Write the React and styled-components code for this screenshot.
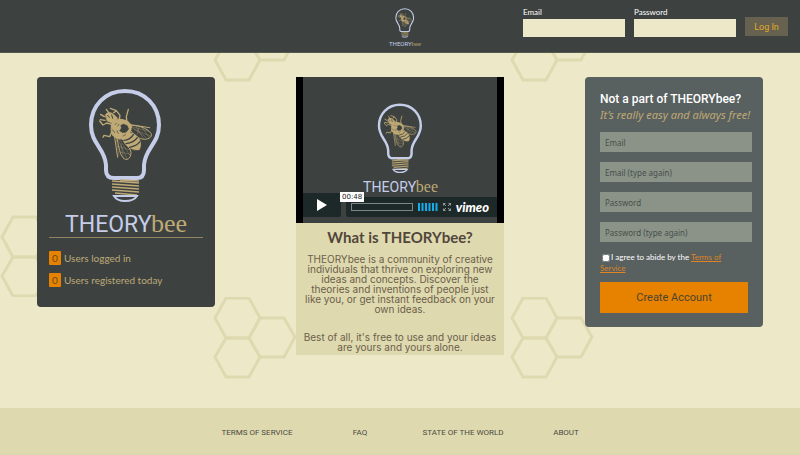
import React from "react";
import styled, { createGlobalStyle } from "styled-components";

const ink = "#3d4241";
const cream = "#ede9c8";
const sand = "#dfd9b0";
const tan = "#bfa975";
const orange = "#e68200";
const lavender = "#c5cde8";

const rounded = `Lato, "Open Sans", sans-serif`;
const technical = `Roboto, "Liberation Sans", sans-serif`;
const humanist = `"Noto Sans", "Open Sans", sans-serif`;

const honeycomb = encodeURIComponent(
  `<svg xmlns="http://www.w3.org/2000/svg" width="297" height="297"><defs><g id="c" fill="none" stroke="#dfd9b0" stroke-width="3"><path d="M215 21 226 1H249L260 21 249 41H226Z"/><path d="M215 60 226 41H249L260 60 249 80H226Z"/><path d="M249 41 260 21H284L295 40 284 60H260Z"/></g></defs><use href="#c"/><use href="#c" x="-213" y="216"/></svg>`
);

const GlobalStyle = createGlobalStyle`
  *, *::before, *::after { box-sizing: border-box; }
  body { margin: 0; background: ${cream}; font-family: ${rounded}; }
  h1, h2, p, ul { margin: 0; padding: 0; }
  input, button { font: inherit; border: 0; border-radius: 0; }
`;

const Page = styled.div`
  display: flex;
  flex-direction: column;
  min-height: 100vh;
  background: ${cream} url("data:image/svg+xml,${honeycomb}");
`;

const Header = styled.header`
  display: grid;
  grid-template-columns: minmax(0, 1fr) auto minmax(0, 1fr);
  align-items: start;
  height: 53px;
  padding: 8px 12px 0 22px;
  background: ${ink};
  border-bottom: 1px solid #55584f;
`;

const HomeLink = styled.a`
  grid-column: 2;
  display: block;
`;

const LoginForm = styled.form`
  display: flex;
  justify-content: flex-end;
  gap: 9px;
`;

const LoginField = styled.label`
  display: flex;
  flex-direction: column;
  gap: 2px;
  color: #fff;
  font-size: 8px;
  line-height: 9px;
`;

const LoginInput = styled.input`
  width: 102px;
  height: 18px;
  padding: 0 4px;
  background: ${cream};
  color: ${ink};
`;

const LoginButton = styled.button`
  width: 43px;
  height: 19px;
  margin-top: 9px;
  padding: 0;
  background: #67614f;
  color: #e2a92b;
  font-family: ${technical};
  font-size: 9px;
`;

const Main = styled.main`
  flex: 1;
  display: flex;
  justify-content: space-between;
  align-items: flex-start;
  padding: 24px 37px 48px;
`;

const StatsCard = styled.section`
  width: 178px;
  padding: 11px 12px 20px;
  border-radius: 4px;
  background: ${ink};
`;

const LogoHolder = styled.div`
  display: flex;
  justify-content: center;
  padding-bottom: 3px;
  border-bottom: 1px solid #8f8460;
`;

const LogoSvg = styled.svg`
  display: block;
  width: ${(p) => p.$width}px;
  height: auto;
  overflow: visible;
`;

const StatList = styled.ul`
  display: grid;
  gap: 8px;
  padding-top: 13px;
  list-style: none;
`;

const Stat = styled.li`
  display: flex;
  align-items: center;
  gap: 3px;
  color: ${tan};
  font-size: 10px;
  line-height: 14px;
`;

const Count = styled.span`
  width: 12px;
  border-radius: 1px;
  background: ${orange};
  color: #6b4a1c;
  text-align: center;
`;

const About = styled.section`
  width: 208px;
  background: ${sand};
`;

const Video = styled.div`
  position: relative;
  display: flex;
  justify-content: center;
  align-items: flex-start;
  height: 146px;
  padding-top: 26px;
  border: solid #000;
  border-width: 0 7px;
  background: ${ink};
`;

const Controls = styled.div`
  position: absolute;
  inset: auto 0 6px 0;
  display: flex;
  align-items: flex-end;
  gap: 5px;
`;

const PlayButton = styled.button`
  display: grid;
  place-items: center;
  width: 38px;
  height: 24px;
  padding: 0;
  border-radius: 0 2px 2px 0;
  background: #1d2929;
`;

const Scrubber = styled.div`
  flex: 1;
  display: flex;
  align-items: center;
  gap: 5px;
  height: 20px;
  padding: 0 8px 0 5px;
  border-radius: 2px 0 0 2px;
  background: #1d2929;
`;

const Track = styled.div`
  position: relative;
  flex: 1;
  height: 8px;
  border: 1px solid #7d8585;
`;

const TimeTip = styled.span`
  position: absolute;
  left: -12px;
  bottom: 8px;
  padding: 0 2px;
  background: #fff;
  color: #222;
  font: 7px/10px "DejaVu Sans", sans-serif;
`;

const IconButton = styled.button`
  display: block;
  padding: 0;
  background: none;
  line-height: 0;
`;

const Wordmark = styled.a`
  color: #fff;
  font: italic 900 13px/16px Lato, sans-serif;
  text-decoration: none;
`;

const AboutText = styled.div`
  display: grid;
  gap: 18px;
  padding: 5px 7px 3px;
  color: #6b6049;
  font: 10px/10px Inter, sans-serif;
  text-align: center;
`;

const AboutTitle = styled.h1`
  margin-bottom: -10px;
  color: #51463a;
  font: 700 15px/18px ${rounded};
`;

const SignupCard = styled.form`
  width: 178px;
  padding: 15px 11px 14px 15px;
  border-radius: 4px;
  background: #596060;
`;

const SignupTitle = styled.h2`
  color: #fff;
  font: 500 12px/15px ${technical};
  white-space: nowrap;
`;

const Tagline = styled.p`
  margin-bottom: 9px;
  color: ${tan};
  font: italic 11px/16px ${humanist};
  white-space: nowrap;
`;

const Fields = styled.div`
  display: grid;
  gap: 10px;
`;

const SignupInput = styled.input`
  width: 100%;
  height: 20px;
  padding: 0 5px;
  background: #8b9388;
  color: #333b38;
  font-family: ${humanist};
  font-size: 8px;

  &::placeholder { color: #464f4b; opacity: 1; }
`;

const Terms = styled.div`
  margin: 10px 0 8px;
  padding-right: 16px;
  color: #fff;
  font-size: 8px;
  line-height: 11px;
`;

const Tick = styled.input`
  width: 8px;
  height: 8px;
  margin: 0 1px 0 2px;
  vertical-align: middle;
`;

const TermsLink = styled.a`
  color: #df8420;
`;

const CreateButton = styled.button`
  width: 148px;
  height: 31px;
  background: ${orange};
  color: #4d4430;
  font-family: ${technical};
  font-size: 11px;
`;

const Footer = styled.footer`
  display: grid;
  grid-template-columns: repeat(4, 103px);
  justify-content: center;
  justify-items: center;
  height: 47px;
  padding: 19px 0 0 23px;
  background: ${sand};
`;

const FooterLink = styled.a`
  color: #4b4b40;
  font: 8px/12px ${technical};
  text-decoration: none;
`;

function Bee() {
  return (
    <g transform="translate(-36 -18) scale(.3333)" fill="none" stroke={tan} strokeLinecap="round" strokeLinejoin="round">
      <g strokeWidth="4">
        <path d="M294 158 292 140 298 118M270 152 273 136 262 122 244 115M262 123 254 128" />
        <path d="M250 164 233 159 222 165 212 153M249 184 242 200 225 196 222 202" />
        <path d="M226 140 215 133M239 128 232 118M228 151 214 149" />
      </g>
      <path d="M304 164 362 173M305 167C322 163 356 175 366 190 372 203 354 210 340 207 324 205 309 190 303 178" strokeWidth="3" />
      <path d="M308 170 358 184M310 173 350 201M322 171 342 204M340 174 360 201M316 178 363 198M330 172 325 193" strokeWidth="1" />
      <path d="M257 202 266 262M263 203C269 222 270 248 281 262 292 276 306 265 306 248 305 235 289 218 280 207" strokeWidth="3" />
      <path d="M268 210 294 266M272 209 302 255M268 229 303 240M273 246 304 253M276 222 283 263M262 209 270 257" strokeWidth="1" />
      <path d="M229 134Q239 121 254 133L266 145 250 160 235 153Z" fill={tan} strokeWidth="2" />
      <path d="M236 136 241 142M248 135 251 145" stroke={ink} strokeWidth="3" />
      <path d="M251 157Q266 145 284 150 302 155 307 170 304 194 286 205 264 211 250 193 243 176 251 157Z" fill={tan} strokeWidth="4" strokeDasharray="3 3" />
      <path d="M276 166 284 162 295 167 299 177 291 187 281 188 272 182 277 175Z" fill={ink} stroke={ink} strokeWidth="2" strokeDasharray="2 4" />
      <path d="M250 179 257 188M258 164 263 159M282 198 290 194M264 182 268 190M266 168 270 163" stroke={ink} strokeWidth="2" />
      <path d="M302 188Q325 191 334 214 337 229 331 239 316 244 298 231 285 222 281 207Z" fill={tan} strokeWidth="2" />
      <path d="M285 211Q304 210 313 194M291 221Q315 218 325 203M302 232Q323 228 333 215" stroke={ink} strokeWidth="4" />
    </g>
  );
}

function Logo({ width }) {
  return (
    <LogoSvg $width={width} viewBox="0 0 122 146" role="img" aria-label="THEORYbee">
      <path
        d="M60 3C40 3 26 18 26 37 26 56 40 60 41 77V82Q41 90 49 90H72Q79 90 79 82V77C80 60 94 56 94 37 94 18 80 3 60 3Z"
        fill="none"
        stroke={lavender}
        strokeWidth="4"
      />
      <Bee />
      <path
        d="M47 93 74 95M47 96 74 98M47 99 74 101M47 102 74 104M50 105 72 107M55 92 74 93"
        stroke={tan}
        strokeWidth="1.6"
      />
      <path d="M49 108H72Q69 113 60 113 52 113 49 108Z" fill={ink} stroke={lavender} strokeWidth="2" />
      <text x="0" y="144" fill={lavender} fontFamily="Roboto, sans-serif" fontSize="23">
        THEORY
      </text>
      <text x="86" y="144" fill={tan} fontFamily="'Liberation Serif', serif" fontSize="26">
        bee
      </text>
    </LogoSvg>
  );
}

const stats = ["Users logged in", "Users registered today"];
const signupFields = [
  ["Email", "email"],
  ["Email (type again)", "email"],
  ["Password", "password"],
  ["Password (type again)", "password"],
];
const footerLinks = ["TERMS OF SERVICE", "FAQ", "STATE OF THE WORLD", "ABOUT"];

export default function App() {
  return (
    <>
      <GlobalStyle />
      <Page>
        <Header>
          <HomeLink href="#home"><Logo width={32} /></HomeLink>
          <LoginForm>
            <LoginField>Email<LoginInput type="email" /></LoginField>
            <LoginField>Password<LoginInput type="password" /></LoginField>
            <LoginButton type="button">Log In</LoginButton>
          </LoginForm>
        </Header>

        <Main>
          <StatsCard>
            <LogoHolder><Logo width={122} /></LogoHolder>
            <StatList>
              {stats.map((s) => (
                <Stat key={s}><Count>0</Count>{s}</Stat>
              ))}
            </StatList>
          </StatsCard>

          <About>
            <Video>
              <Logo width={75} />
              <Controls>
                <PlayButton type="button" aria-label="Play">
                  <svg width="10" height="12" viewBox="0 0 10 12"><path d="M0 0 10 6 0 12Z" fill="#fff" /></svg>
                </PlayButton>
                <Scrubber>
                  <Track><TimeTip>00:48</TimeTip></Track>
                  <IconButton type="button" aria-label="Volume">
                    <svg width="20" height="8" viewBox="0 0 20 8">
                      <path d="M1 0V8M4.5 0V8M8 0V8M11.500 0V8M15 0V8M18.500 0V8" stroke="#16aeea" strokeWidth="2" />
                    </svg>
                  </IconButton>
                  <IconButton type="button" aria-label="Full screen">
                    <svg width="8" height="8" viewBox="0 0 8 8">
                      <path d="M0 .5H2.500M.5 0V2.500M1 1 3 3M5.500 .5H8M7.500 0V2.500M7 1 5 3M0 7.500H2.500M.5 5.500V8M1 7 3 5M5.500 7.500H8M7.500 5.500V8M7 7 5 5" stroke="#8f9797" />
                    </svg>
                  </IconButton>
                  <Wordmark href="#vimeo">vimeo</Wordmark>
                </Scrubber>
              </Controls>
            </Video>
            <AboutText>
              <AboutTitle>What is THEORYbee?</AboutTitle>
              <p>
                THEORYbee is a community of creative individuals that thrive on exploring new<br />ideas and
                concepts. Discover the<br />theories and inventions of people just like you, or get instant
                feedback on your own ideas.
              </p>
              <p>Best of all, it's free to use and your ideas are yours and yours alone.</p>
            </AboutText>
          </About>

          <SignupCard>
            <SignupTitle>Not a part of THEORYbee?</SignupTitle>
            <Tagline>It’s really easy and always free!</Tagline>
            <Fields>
              {signupFields.map(([name, type]) => (
                <SignupInput key={name} type={type} placeholder={name} aria-label={name} />
              ))}
            </Fields>
            <Terms>
              <Tick type="checkbox" id="agree" />
              <label htmlFor="agree">I agree to abide by the </label>
              <TermsLink href="#terms">Terms of Service</TermsLink>
            </Terms>
            <CreateButton type="button">Create Account</CreateButton>
          </SignupCard>
        </Main>

        <Footer>
          {footerLinks.map((t) => (
            <FooterLink key={t} href="#footer">{t}</FooterLink>
          ))}
        </Footer>
      </Page>
    </>
  );
}
